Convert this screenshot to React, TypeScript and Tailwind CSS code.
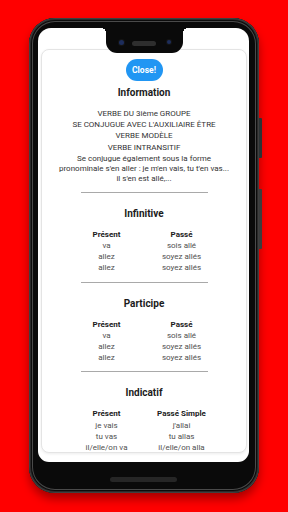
import React from "react";

type Sec = { title: string; left: string; right: string; rows: [string, string][] };

const sections: Sec[] = [
  {
    title: "Infinitive",
    left: "Présent",
    right: "Passé",
    rows: [
      ["va", "sois allé"],
      ["allez", "soyez allés"],
      ["allez", "soyez allés"],
    ],
  },
  {
    title: "Participe",
    left: "Présent",
    right: "Passé",
    rows: [
      ["va", "sois allé"],
      ["allez", "soyez allés"],
      ["allez", "soyez allés"],
    ],
  },
  {
    title: "Indicatif",
    left: "Présent",
    right: "Passé Simple",
    rows: [
      ["je vais", "j'allai"],
      ["tu vas", "tu allas"],
      ["il/elle/on va", "il/elle/on alla"],
    ],
  },
];

function Divider({ className = "" }: { className?: string }) {
  return <div className={"w-[127px] h-px bg-[#a9a9a9] shrink-0 " + className} />;
}

function Section({ s }: { s: Sec }) {
  return (
    <div className="flex flex-col items-center shrink-0">
      <div className="mt-[14px] text-[10px] leading-[14px] font-bold text-[#1b1b1b]">{s.title}</div>
      <div className="mt-[8px] grid grid-cols-2 w-[150px] text-[8px] leading-[11.2px] text-center">
        <div className="font-bold text-[#1b1b1b]">{s.left}</div>
        <div className="font-bold text-[#1b1b1b]">{s.right}</div>
        {s.rows.map(([a, b], i) => (
          <React.Fragment key={i}>
            <div className="text-[#505050]">{a}</div>
            <div className="text-[#505050]">{b}</div>
          </React.Fragment>
        ))}
      </div>
      <Divider className="mt-[8px]" />
    </div>
  );
}

export default function App() {
  return (
    <div className="w-[288px] h-[512px] bg-[#ff0000] pt-[18px] pl-[29px] overflow-hidden font-['Roboto',sans-serif]">
      <div className="relative w-[230px] h-[475px] rounded-[26px] bg-[#0a0a0a] pt-[10px] pl-[9px] pr-[10px] flex flex-col shadow-[inset_0_0_0_1px_#404040,inset_0_0_0_2px_#2a2a2a,inset_0_0_0_3px_#0c0c0c,inset_0_0_0_4px_#4a4a4a,0_6px_10px_rgba(0,0,0,0.35)]">
        <div className="absolute right-[-3px] top-[100px] w-[3px] h-[40px] bg-[#2b3335] rounded-r-[1px]" />
        <div className="absolute right-[-3px] top-[171px] w-[3px] h-[60px] bg-[#3a3d3e] rounded-r-[1px]" />
        <div className="relative h-[434px] bg-white rounded-t-[13px] rounded-b-[11px] overflow-hidden">
          <div className="absolute left-[68px] top-0 w-[77px] h-[25px] bg-[#0a0a0a] rounded-b-[11px] z-10">
            <div className="absolute left-[-5px] top-0 w-[5px] h-[5px] bg-[radial-gradient(circle_at_0_100%,transparent_5px,#0a0a0a_5px)]" />
            <div className="absolute right-[-5px] top-0 w-[5px] h-[5px] bg-[radial-gradient(circle_at_100%_100%,transparent_5px,#0a0a0a_5px)]" />
            <div className="absolute left-[13px] top-[12px] w-[5px] h-[5px] rounded-full bg-[#1d2d5c] shadow-[0_0_0_1px_#151515]" />
            <div className="absolute left-[61px] top-[12px] w-[4px] h-[4px] rounded-full bg-[#1d2d5c] shadow-[0_0_0_1px_#151515]" />
            <div className="absolute left-[26px] top-[13px] w-[24px] h-[5px] rounded-full bg-[#2e2e2e]" />
          </div>
          <div className="mt-[21px] ml-[3px] w-[206px] h-[404px] rounded-[8px] border border-[#e4e4e4] bg-white overflow-hidden shadow-[0_1px_3px_rgba(0,0,0,0.08)] flex flex-col items-center">
            <div className="mt-[9px] shrink-0 w-[37px] h-[22px] rounded-full bg-[#2196f3] text-white text-[8.5px] font-bold flex items-center justify-center">
              Close!
            </div>
            <div className="mt-[5px] text-[10px] leading-[14px] font-bold text-[#1b1b1b] shrink-0">Information</div>
            <div className="mt-[8px] text-[8px] leading-[11.2px] text-[#333] text-center flex flex-col items-center shrink-0">
              <div>VERBE DU 3ième GROUPE</div>
              <div>SE CONJUGUE AVEC L'AUXILIAIRE ÊTRE</div>
              <div>VERBE MODÈLE</div>
              <div>VERBE INTRANSITIF</div>
              <div className="mt-px leading-[10px] whitespace-nowrap">
                Se conjugue également sous la forme
                <br />
                pronominale s'en aller : je m'en vais, tu t'en vas...
                <br />
                il s'en est allé,...
              </div>
            </div>
            <Divider className="mt-[8px]" />
            {sections.map((s) => (
              <Section key={s.title} s={s} />
            ))}
          </div>
        </div>
        <div className="mt-[15px] mx-auto w-[67px] h-[5px] rounded-full bg-[#262626]" />
      </div>
    </div>
  );
}
